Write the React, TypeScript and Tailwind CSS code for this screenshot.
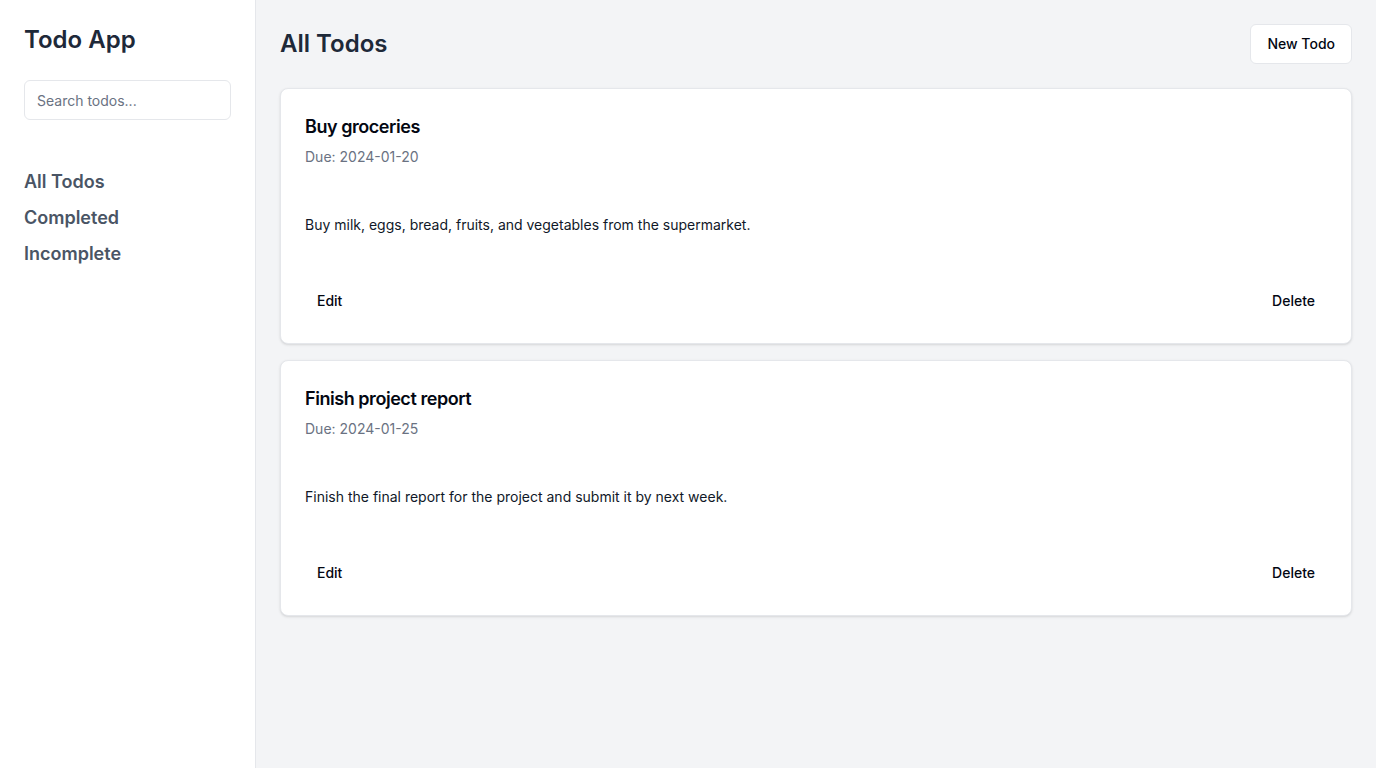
const todos = [
  {
    id: 1,
    title: "Buy groceries",
    due: "2024-01-20",
    body: "Buy milk, eggs, bread, fruits, and vegetables from the supermarket.",
  },
  {
    id: 2,
    title: "Finish project report",
    due: "2024-01-25",
    body: "Finish the final report for the project and submit it by next week.",
  },
];

function Sidebar() {
  return (
    <aside className="w-64 shrink-0 border-r border-gray-200 bg-white p-6">
      <h1 className="text-2xl font-semibold text-gray-800">Todo App</h1>
      <input
        type="text"
        placeholder="Search todos..."
        className="mt-6 h-10 w-full rounded-md border border-gray-200 bg-white px-3 text-sm text-gray-900 placeholder:text-gray-500 focus:outline-none"
      />
      <nav className="mt-12 flex flex-col gap-2">
        <a href="#" className="text-lg font-semibold text-gray-600">All Todos</a>
        <a href="#" className="text-lg font-semibold text-gray-600">Completed</a>
        <a href="#" className="text-lg font-semibold text-gray-600">Incomplete</a>
      </nav>
    </aside>
  );
}

function TodoCard({ title, due, body }: { title: string; due: string; body: string }) {
  return (
    <div className="rounded-lg border border-gray-200 bg-white shadow-sm">
      <div className="flex flex-col gap-1.5 p-6">
        <h3 className="text-lg font-semibold tracking-tight text-gray-950">{title}</h3>
        <p className="text-sm text-gray-500">Due: {due}</p>
      </div>
      <div className="p-6">
        <p className="text-sm text-gray-900">{body}</p>
      </div>
      <div className="flex items-center justify-between px-6 pt-[22px] pb-[22px]">
        <button className="h-10 rounded-md px-3 text-sm font-medium text-gray-950 hover:bg-gray-100">
          Edit
        </button>
        <button className="h-10 rounded-md px-3 text-sm font-medium text-gray-950 hover:bg-gray-100">
          Delete
        </button>
      </div>
    </div>
  );
}

export default function App() {
  return (
    <div className="flex min-h-screen bg-gray-100 font-['Inter',sans-serif]">
      <Sidebar />
      <main className="flex-1 p-6">
        <div className="flex items-center justify-between">
          <h2 className="text-2xl font-semibold text-gray-800">All Todos</h2>
          <button className="h-10 rounded-md border border-gray-200 bg-white px-4 text-sm font-medium text-gray-950">
            New Todo
          </button>
        </div>
        <div className="mt-6 flex flex-col gap-4">
          {todos.map((t) => (
            <TodoCard key={t.id} title={t.title} due={t.due} body={t.body} />
          ))}
        </div>
      </main>
    </div>
  );
}
